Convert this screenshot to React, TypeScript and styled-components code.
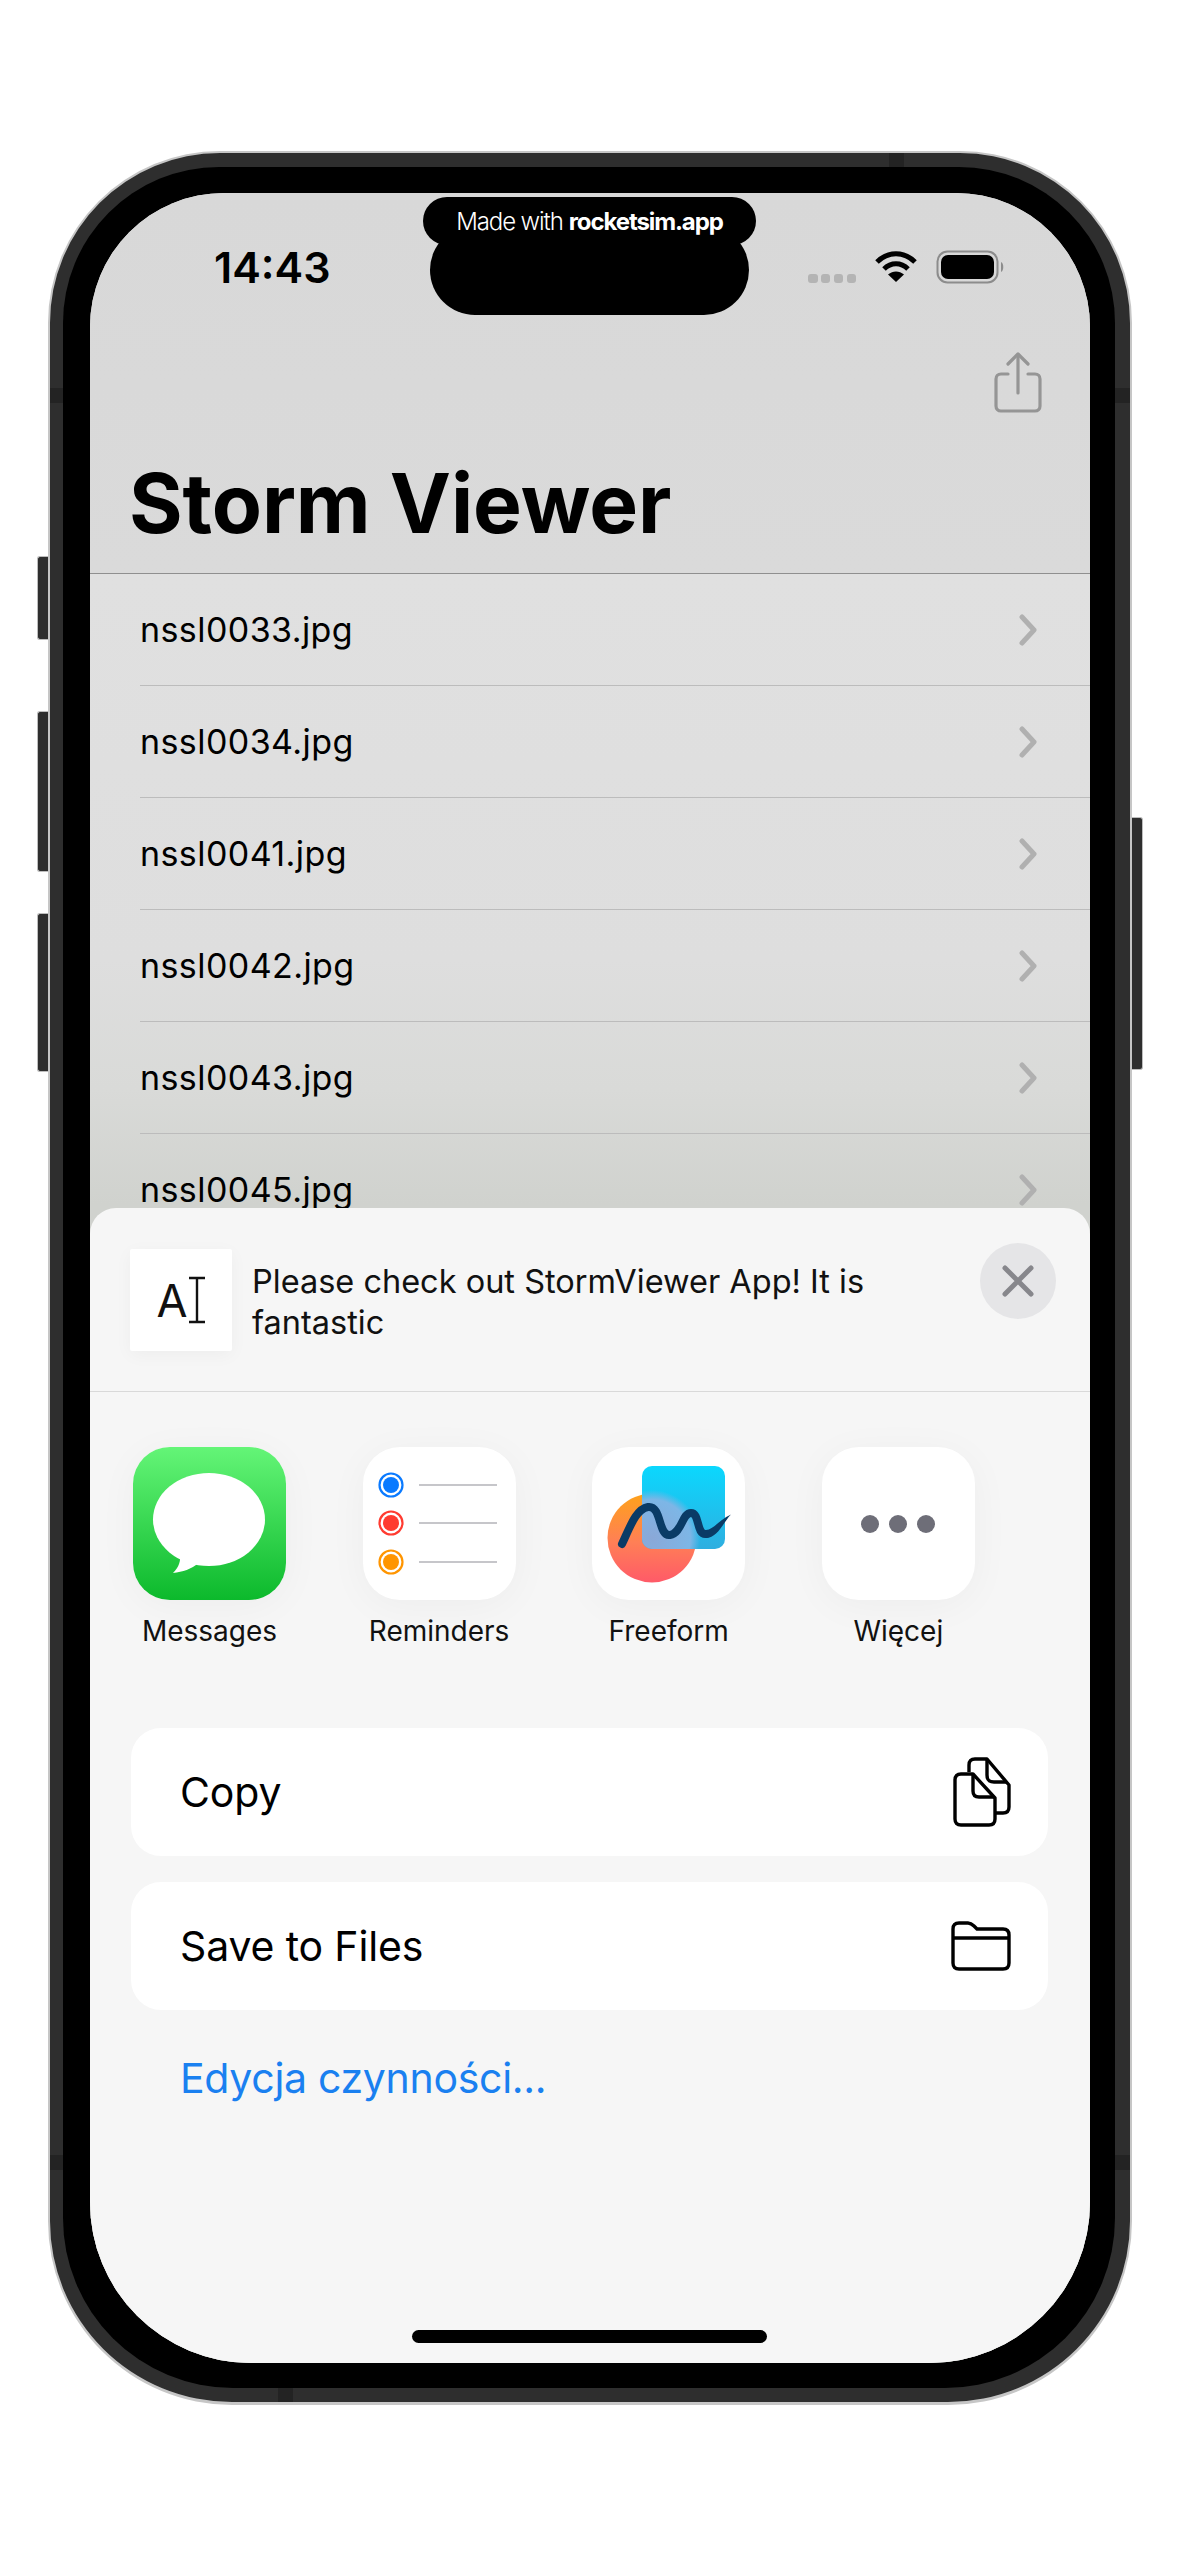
import React from 'react';
import styled, { createGlobalStyle } from 'styled-components';

const files = ['nssl0033.jpg', 'nssl0034.jpg', 'nssl0041.jpg', 'nssl0042.jpg', 'nssl0043.jpg', 'nssl0045.jpg'];

const GlobalStyle = createGlobalStyle`
  html, body {
    margin: 0;
    background: #fff;
  }
  body {
    font-family: Inter, "Noto Sans", sans-serif;
    color: #000;
  }
`;

const Page = styled.div`
  width: 1179px;
  height: 2556px;
  padding: 151px 0 0 48px;
  box-sizing: border-box;
  overflow: hidden;
`;

const Phone = styled.div`
  position: relative;
  width: 1084px;
  height: 2254px;
  box-sizing: border-box;
  padding: 14px 15px 14px 13px;
  background: #2e2e2e;
  border: 2px solid #c6c6c6;
  border-bottom-width: 3px;
  border-radius: 172px 172px 184px 184px;
`;

const SideButton = styled.div<{ $side: 'left' | 'right'; $top: number; $height: number }>`
  position: absolute;
  top: ${({ $top }) => $top - 153}px;
  height: ${({ $height }) => $height}px;
  width: 11px;
  background: #2e2e2e;
  border: 1px solid #bdbdbd;
  box-sizing: border-box;
  ${({ $side }) =>
    $side === 'left'
      ? 'left: -13px; border-right: 0; border-radius: 3px 0 0 3px;'
      : 'right: -13px; border-left: 0; border-radius: 0 3px 3px 0;'}
`;

const AntennaBand = styled.div<{ $x?: number; $y?: number; $edge: 'left' | 'right' | 'top' | 'bottom' }>`
  position: absolute;
  background: #232323;
  ${({ $edge, $x, $y }) => {
    if ($edge === 'left') return `left: 0; top: ${$y}px; width: 13px; height: 15px;`;
    if ($edge === 'right') return `right: 0; top: ${$y}px; width: 15px; height: 15px;`;
    if ($edge === 'top') return `top: 0; left: ${$x}px; width: 15px; height: 14px;`;
    return `bottom: 0; left: ${$x}px; width: 15px; height: 14px;`;
  }}
`;

const Bezel = styled.div`
  position: relative;
  height: 100%;
  box-sizing: border-box;
  padding: 26px 25px 25px 27px;
  background: #000;
  border-radius: 156px 156px 170px 170px;
`;

const Screen = styled.div`
  position: relative;
  width: 1000px;
  height: 2170px;
  overflow: hidden;
  display: flex;
  flex-direction: column;
  background: #e0e0e0;
  border-radius: 134px 134px 161px 161px;
`;

const NavBar = styled.header`
  height: 381px;
  flex: none;
  box-sizing: border-box;
  padding: 56px 49px 0 39px;
  background: linear-gradient(#d8d8d8, #dadada);
  border-bottom: 1px solid #8f8f8f;
  display: flex;
  flex-direction: column;
`;

const StatusRow = styled.div`
  height: 36px;
  display: flex;
  justify-content: space-between;
  align-items: center;
`;

const Clock = styled.span`
  margin-left: 85px;
  font-size: 43px;
  line-height: 36px;
  font-weight: 600;
`;

const StatusIcons = styled.div`
  display: flex;
  align-items: center;
  gap: 19px;
  margin-right: 35px;
`;

const SignalDots = styled.div`
  display: flex;
  gap: 3.3px;
  align-self: flex-end;
  margin-bottom: 1px;
`;

const SignalDot = styled.i`
  width: 9.5px;
  height: 9.5px;
  border-radius: 3px;
  background: #b4b4b4;
`;

const ShareButton = styled.div`
  margin-top: 67px;
  margin-right: -1px;
  align-self: flex-end;
  display: flex;
`;

const Title = styled.h1`
  margin: 50px 0 0 0;
  font-size: 82px;
  line-height: 80px;
  font-weight: 700;
  letter-spacing: -0.1px;
`;

const FileList = styled.ul`
  list-style: none;
  margin: 0;
  padding: 0 0 0 50px;
  flex: 1;
  background: linear-gradient(#e0e0e0 0, #dedede 385px, #d9dad8 515px, #d0d2ce 630px, #d0d2ce 100%);
`;

const FileRow = styled.li`
  height: 111px;
  padding-right: 53px;
  display: flex;
  align-items: center;
  justify-content: space-between;
  border-bottom: 1px solid #bcbcbc;
  font-size: 34px;
  letter-spacing: 0.42px;
`;

const Island = styled.div`
  position: absolute;
  top: 32px;
  left: 340px;
  width: 319px;
  height: 90px;
  background: #000;
  border-radius: 46px;
  z-index: 5;
`;

const RocketPill = styled.div`
  position: absolute;
  top: 4px;
  left: 333px;
  width: 333px;
  height: 48px;
  display: flex;
  align-items: center;
  justify-content: center;
  background: #000;
  border-radius: 24px;
  color: #fff;
  font-size: 24px;
  font-weight: 300;
  letter-spacing: -1.1px;
  z-index: 6;

  b {
    margin-left: 6px;
    font-weight: 700;
  }
`;

const Sheet = styled.section`
  position: absolute;
  left: 0;
  right: 0;
  top: 1015px;
  bottom: 0;
  background: #f6f6f6;
  border-radius: 26px 26px 0 0;
  display: flex;
  flex-direction: column;
`;

const SheetHeader = styled.div`
  position: relative;
  height: 184px;
  flex: none;
  box-sizing: border-box;
  padding: 41px 40px 0 40px;
  display: flex;
  gap: 20px;
  border-bottom: 1px solid #d9d9d9;
`;

const Thumb = styled.div`
  flex: none;
  width: 102px;
  height: 102px;
  background: #fff;
  border-radius: 2px;
  box-shadow: 0 4px 18px rgba(0, 0, 0, 0.04);
  display: flex;
  align-items: center;
  justify-content: center;
`;

const ThumbLetter = styled.span`
  font-size: 45px;
  line-height: 45px;
  color: #111;
`;

const ShareText = styled.p`
  margin: 12px 0 0 0;
  width: 640px;
  font-size: 32.5px;
  line-height: 41px;
  color: #111;
`;

const CloseButton = styled.div`
  position: absolute;
  top: 35px;
  right: 34px;
  width: 76px;
  height: 76px;
  border-radius: 50%;
  background: #e5e5e7;
  display: flex;
  align-items: center;
  justify-content: center;
`;

const AppRow = styled.div`
  display: flex;
  gap: 76.6px;
  padding: 55px 0 0 43px;
`;

const AppItem = styled.div`
  width: 153px;
  display: flex;
  flex-direction: column;
  align-items: center;
`;

const AppIcon = styled.div`
  width: 153px;
  height: 153px;
  border-radius: 37px;
  background: #fff;
  overflow: hidden;
  box-shadow: 0 6px 40px rgba(0, 0, 0, 0.04);
  display: flex;
  align-items: center;
  justify-content: center;
`;

const AppLabel = styled.span`
  margin-top: 15px;
  font-size: 28px;
  line-height: 32px;
  color: #111;
  white-space: nowrap;
`;

const Actions = styled.div`
  display: flex;
  flex-direction: column;
  gap: 26px;
  padding: 81px 42px 0 41px;
`;

const ActionCard = styled.div`
  height: 128px;
  box-sizing: border-box;
  padding: 0 37px 0 52px;
  display: flex;
  align-items: center;
  justify-content: space-between;
  background: #fff;
  border-radius: 30px;
  font-size: 41px;
  letter-spacing: -0.15px;
`;

const CardLabel = styled.span`
  margin-left: -3px;
`;

const EditLink = styled.div`
  margin-top: 42px;
  padding-left: 90px;
  font-size: 41px;
  line-height: 52px;
  letter-spacing: -0.3px;
  color: #1a80f0;
`;

const HomeBar = styled.div`
  position: absolute;
  left: 322px;
  bottom: 20px;
  width: 355px;
  height: 13px;
  border-radius: 7px;
  background: #000;
`;

const Chevron = () => (
  <svg width="18" height="32" viewBox="0 0 18 32" fill="none" stroke="#b0b0b0" strokeWidth="5" strokeLinecap="round" strokeLinejoin="round">
    <path d="M3 3 L15 16 L3 29" />
  </svg>
);

const WifiIcon = () => (
  <svg width="42" height="32" viewBox="0 0 42 32" fill="none" stroke="#000" strokeWidth="5">
    <path d="M2 11 C13 0 29 0 40 11" />
    <path d="M9 18 C16 11 26 11 33 18" />
    <path d="M21 31 L13 23.5 C18 19.5 24 19.5 29 23.5 Z" fill="#000" stroke="none" />
  </svg>
);

const BatteryIcon = () => (
  <svg width="70" height="34" viewBox="0 0 70 34" fill="none">
    <rect x="1.5" y="1.5" width="60" height="31" rx="10" stroke="#8c8c8c" strokeWidth="2" />
    <rect x="5" y="5" width="53" height="24" rx="7" fill="#000" />
    <path d="M65 12 C68 13 68 21 65 22 Z" fill="#8c8c8c" />
  </svg>
);

const ShareIcon = () => (
  <svg width="48" height="62" viewBox="0 0 48 62" fill="none" stroke="#959595" strokeWidth="3.2" strokeLinecap="round" strokeLinejoin="round">
    <path d="M14 22 H7 C4 22 2 24 2 27 V54 C2 57 4 59 7 59 H41 C44 59 46 57 46 54 V27 C46 24 44 22 41 22 H34" />
    <path d="M24 41 V3" />
    <path d="M14 12 L24 2 L34 12" />
  </svg>
);

const CloseIcon = () => (
  <svg width="32" height="32" viewBox="0 0 32 32" fill="none" stroke="#87878c" strokeWidth="5" strokeLinecap="round">
    <path d="M3 3 L29 29 M29 3 L3 29" />
  </svg>
);

const CursorIcon = () => (
  <svg width="18" height="48" viewBox="0 0 18 48" fill="none" stroke="#111" strokeWidth="2.4">
    <path d="M1 2 H17 M1 46 H17 M9 2 V46" />
  </svg>
);

const MessagesIcon = () => (
  <svg width="153" height="153" viewBox="0 0 153 153">
    <defs>
      <linearGradient id="msgBg" x1="0" y1="0" x2="0" y2="1">
        <stop offset="0" stopColor="#64f577" />
        <stop offset="1" stopColor="#0cb92c" />
      </linearGradient>
    </defs>
    <rect width="153" height="153" fill="url(#msgBg)" />
    <ellipse cx="76" cy="72.5" rx="56" ry="46.5" fill="#fff" />
    <path d="M47 106 C48 114 46 120 40 126 C50 125 58 122 66 116 Z" fill="#fff" />
  </svg>
);

const RemindersIcon = () => (
  <svg width="153" height="153" viewBox="0 0 153 153" fill="none">
    {[
      { y: 38, color: '#0a7aff' },
      { y: 76, color: '#ff3b30' },
      { y: 115, color: '#ff9500' },
    ].map(({ y, color }) => (
      <g key={y}>
        <circle cx="28" cy={y} r="11.5" stroke={color} strokeWidth="2.2" />
        <circle cx="28" cy={y} r="8" fill={color} />
        <path d={`M56 ${y} H134`} stroke="#c6c6ca" strokeWidth="2.2" />
      </g>
    ))}
  </svg>
);

const FreeformIcon = () => (
  <svg width="153" height="153" viewBox="0 0 153 153">
    <defs>
      <linearGradient id="ffCircle" x1="0" y1="0" x2="0" y2="1">
        <stop offset="0" stopColor="#fea21a" />
        <stop offset="0.55" stopColor="#ff7f56" />
        <stop offset="1" stopColor="#ff5a68" />
      </linearGradient>
      <linearGradient id="ffSquare" x1="0" y1="0" x2="0" y2="1">
        <stop offset="0" stopColor="#0bd8fe" />
        <stop offset="1" stopColor="#2eaee0" />
      </linearGradient>
      <radialGradient id="ffGlow" gradientUnits="userSpaceOnUse" cx="60" cy="91" r="48">
        <stop offset="0" stopColor="#8aa8d8" />
        <stop offset="0.8" stopColor="#7db6e6" />
        <stop offset="1" stopColor="#7db6e6" stopOpacity="0" />
      </radialGradient>
    </defs>
    <circle cx="60" cy="91" r="44.5" fill="url(#ffCircle)" />
    <rect x="50" y="19" width="83" height="83" rx="10" fill="url(#ffSquare)" />
    <rect x="50" y="19" width="83" height="83" rx="10" fill="url(#ffGlow)" />
    <path
      d="M30 97 C38 80 44 62 56 60 C70 58 66 90 78 88 C90 86 90 66 99 66 C108 66 104 88 114 87"
      fill="none"
      stroke="#0a3b66"
      strokeWidth="8"
      strokeLinecap="round"
    />
    <path d="M114 83 C122 82.5 128 72 139 67.5 C132 74 126 91 114 91 Z" fill="#0a3b66" />
  </svg>
);

const MoreIcon = () => (
  <svg width="153" height="153" viewBox="0 0 153 153" fill="#6e6e78">
    <circle cx="48" cy="77" r="9" />
    <circle cx="76" cy="77" r="9" />
    <circle cx="104" cy="77" r="9" />
  </svg>
);

const CopyIcon = () => (
  <svg width="58" height="70" viewBox="0 0 58 70" fill="none" stroke="#000" strokeWidth="3.4" strokeLinejoin="round">
    <path d="M16 15 V8 C16 4 18 2 22 2 H34 L56 28 V50 C56 54 54 56 50 56 H43" />
    <path d="M34 2 V18 C34 23 36 25 41 25 H54" />
    <path d="M2 23 C2 19 4 17 8 17 H20 L42 41 V62 C42 66 40 68 36 68 H8 C4 68 2 66 2 62 Z" fill="#fff" />
    <path d="M20 17 V34 C20 38 22 40 26 40 H41" />
  </svg>
);

const FolderIcon = () => (
  <svg width="60" height="50" viewBox="0 0 60 50" fill="none" stroke="#000" strokeWidth="3.4" strokeLinejoin="round">
    <path d="M2 8 C2 4 4 2 8 2 H17 C20 2 21 3 23 5 L26 8 H52 C56 8 58 10 58 14 V42 C58 46 56 48 52 48 H8 C4 48 2 46 2 42 Z" />
    <path d="M2 17 H58" />
  </svg>
);

const apps = [
  { name: 'Messages', icon: <MessagesIcon /> },
  { name: 'Reminders', icon: <RemindersIcon /> },
  { name: 'Freeform', icon: <FreeformIcon /> },
  { name: 'Więcej', icon: <MoreIcon /> },
];

const App = () => (
  <Page>
    <GlobalStyle />
    <Phone>
      <SideButton $side="left" $top={556} $height={84} />
      <SideButton $side="left" $top={711} $height={161} />
      <SideButton $side="left" $top={913} $height={159} />
      <SideButton $side="right" $top={817} $height={253} />
      <AntennaBand $edge="left" $y={235} />
      <AntennaBand $edge="right" $y={235} />
      <AntennaBand $edge="left" $y={2002} />
      <AntennaBand $edge="right" $y={2002} />
      <AntennaBand $edge="top" $x={839} />
      <AntennaBand $edge="bottom" $x={228} />
      <Bezel>
        <Screen>
          <RocketPill>
            Made with <b>rocketsim.app</b>
          </RocketPill>
          <Island />
          <NavBar>
            <StatusRow>
              <Clock>14:43</Clock>
              <StatusIcons>
                <SignalDots>
                  <SignalDot />
                  <SignalDot />
                  <SignalDot />
                  <SignalDot />
                </SignalDots>
                <WifiIcon />
                <BatteryIcon />
              </StatusIcons>
            </StatusRow>
            <ShareButton>
              <ShareIcon />
            </ShareButton>
            <Title>Storm Viewer</Title>
          </NavBar>
          <FileList>
            {files.map((file) => (
              <FileRow key={file}>
                {file}
                <Chevron />
              </FileRow>
            ))}
          </FileList>
          <Sheet>
            <SheetHeader>
              <Thumb>
                <ThumbLetter>A</ThumbLetter>
                <CursorIcon />
              </Thumb>
              <ShareText>Please check out StormViewer App! It is fantastic</ShareText>
              <CloseButton>
                <CloseIcon />
              </CloseButton>
            </SheetHeader>
            <AppRow>
              {apps.map(({ name, icon }) => (
                <AppItem key={name}>
                  <AppIcon>{icon}</AppIcon>
                  <AppLabel>{name}</AppLabel>
                </AppItem>
              ))}
            </AppRow>
            <Actions>
              <ActionCard>
                <CardLabel>Copy</CardLabel>
                <CopyIcon />
              </ActionCard>
              <ActionCard>
                <CardLabel>Save to Files</CardLabel>
                <FolderIcon />
              </ActionCard>
            </Actions>
            <EditLink>Edycja czynności...</EditLink>
            <HomeBar />
          </Sheet>
        </Screen>
      </Bezel>
    </Phone>
  </Page>
);

export default App;
